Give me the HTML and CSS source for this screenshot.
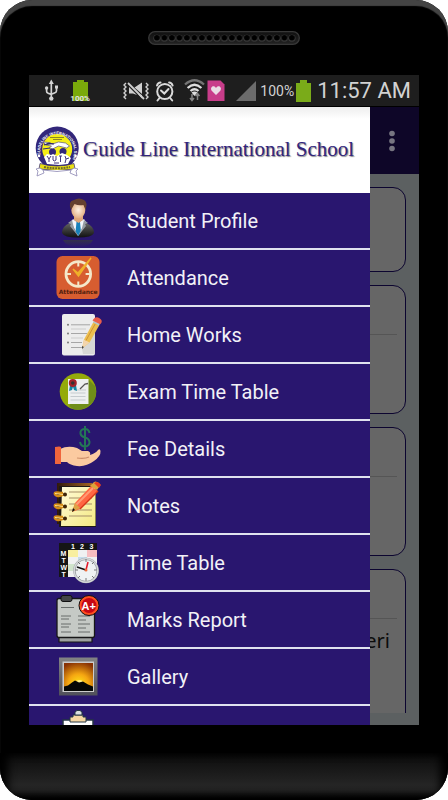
FILE: index.html
```html
<!DOCTYPE html>
<html lang="en">
<head>
<meta charset="utf-8">
<meta name="viewport" content="width=device-width, initial-scale=1">
<title>Guide Line International School</title>
<link rel="stylesheet" href="styles.css">
</head>
<body>
<div class="phone">
  <div class="phone-top">
    <svg class="speaker" width="152" height="14" viewBox="0 0 152 14" aria-hidden="true">
      <defs>
        <linearGradient id="spk" x1="0" y1="0" x2="0" y2="1"><stop offset="0" stop-color="#111"/><stop offset="1" stop-color="#222"/></linearGradient>
        <pattern id="holes" x="5.2" y="3" width="7.5" height="8" patternUnits="userSpaceOnUse">
          <circle cx="3.7" cy="4.2" r="3.4" fill="#404040"/><circle cx="3.7" cy="3.8" r="2.8" fill="#000"/>
        </pattern>
      </defs>
      <rect x=".7" y=".7" width="150.6" height="12.6" rx="6.3" fill="url(#spk)" stroke="#383838" stroke-width="1.3"/>
      <rect x="5.2" y="3" width="142.5" height="8" fill="url(#holes)"/>
    </svg>
  </div>

  <div class="screen">
    <header class="status">
      <svg class="status-icons" width="200" height="31" viewBox="0 0 200 31" aria-hidden="true">
        <g fill="none" stroke="#d4d4d4" stroke-width="1.7" stroke-linecap="round" stroke-linejoin="round">
          <path d="M22.3 8v15M17.6 13.500v2.700q0 1.500 1.500 2l3.200 1.200M27.500 12.800v3q0 1.600-1.500 2l-3.700 1.400"/>
        </g>
        <g fill="#d4d4d4"><path d="M22.300 4.500l2.500 4.500h-5z"/><circle cx="22.300" cy="23.600" r="2.200"/><circle cx="17.600" cy="13" r="1.700"/><path d="M26 10.500h3v3h-3z"/></g>
        <path d="M44 7h4V5h7v2h4v19H44z" fill="#7aaa0b"/>
        <text x="51.200" y="25.700" text-anchor="middle" class="tiny-percent">100%</text>
        <g stroke="#cfcfcf" fill="none" stroke-width="1.500">
          <path d="M97 8l-2 2 2 2-2 2 2 2-2 2 2 2-2 2 2 2M117 8l2 2-2 2 2 2-2 2 2 2-2 2 2 2-2 2" stroke-width="1.400"/>
          <path d="M99 8l16 16" stroke-width="1.800"/>
        </g>
        <path d="M100 12l8 8-4-1.500H100zM105.500 12.500L113 7.500v11.500zM109 19l4 4.500V20z" fill="#cfcfcf"/>
        <g stroke="#dadada" fill="none" stroke-width="2" stroke-linecap="round"><circle cx="135.800" cy="16.500" r="7.600"/><path d="M132 15.500l3.300 3 4.200-4.500M128 10.500q1-3 3.500-3M143.600 10.500q-1-3-3.500-3M130.500 23l-2 2.500M141.200 23l2 2.500"/></g>
        <g fill="none" stroke-width="2.300"><path d="M156 9.500Q165.500 1 175 9.500" stroke="#747474"/><path d="M158.600 13Q165.500 6.500 172.400 13M161.500 16Q165.500 12.500 169.500 16" stroke="#dedede"/></g>
        <path d="M162.500 17.500l3 3.500 3-3.500q-3-2-6 0z" fill="#dedede"/>
        <path d="M163 19v6M161 23l2 2.500 2-2.500M168.500 25v-6M166.500 21l2-2.500 2 2.500" fill="none" stroke="#858585" stroke-width="1.500"/>
        <path d="M178.500 5.500h13l4 4V26h-17z" fill="#c83d8a"/>
        <path d="M187 20l-4.500-4.500c-1.800-3.500 2.500-6 4.500-2.500 2-3.500 6.300-1 4.500 2.500z" fill="#eadde5"/>
      </svg>
      <svg class="signal" width="20" height="20" viewBox="0 0 20 20" aria-hidden="true"><path d="M0 20L20 0v20z" fill="#6c6c6c"/></svg>
      <span class="percent">100%</span>
      <svg class="battery" width="15" height="22" viewBox="0 0 15 22" aria-hidden="true"><path d="M0 3h4V0h7v3h4v19H0z" fill="#7aab19"/></svg>
      <span class="clock">11:57 AM</span>
    </header>

    <div class="app">
      <div class="toolbar">
        <button class="more" type="button" aria-label="More options">
          <svg width="6" height="22" viewBox="0 0 6 22"><g fill="#777581"><circle cx="3" cy="3.500" r="2.800"/><circle cx="3" cy="11" r="2.800"/><circle cx="3" cy="18.500" r="2.800"/></g></svg>
        </button>
      </div>
      <main class="cards">
        <section class="card card-short"></section>
        <section class="card"><hr></section>
        <section class="card"><hr></section>
        <section class="card card-last"><hr><p>eri</p></section>
      </main>

      <nav class="drawer" aria-label="Main menu">
        <div class="brand">
          <svg width="44" height="54" viewBox="0 0 44 54" aria-hidden="true">
            <defs><path id="ring" d="M7 34a17 17 0 1 1 30.400 0"/></defs>
            <circle cx="22.200" cy="23" r="21.500" fill="#32277a"/>
            <circle cx="22.200" cy="24" r="15" fill="#f4ee16"/>
            <text class="crest-text"><textPath href="#ring" startOffset="4">GUIDELINE INTERNATIONAL SCHOOL</textPath></text>
            <circle cx="4" cy="31" r="1.300" fill="#fff"/><circle cx="40.500" cy="31" r="1.300" fill="#fff"/>
            <path d="M15 12.500h14M18 14.500h9" stroke="#8d8824"/>
            <path d="M8.500 17l5 .5 4 1.500 6-2 7 1 4 3-3 2-8-2-6 3-3-1 2-2-6-1z" fill="#fff" stroke="#555381" stroke-width=".7"/>
            <path d="M9 20l5-2 5 1M8 24l7-1" stroke="#32277a" stroke-width="1.200"/>
            <circle cx="17.500" cy="27" r="3.500" fill="#32277a"/><circle cx="28" cy="26.500" r="3.500" fill="#32277a"/>
            <path d="M9 32l3-3 4 1 2-1 4 2 5-3 5 2 4 3-3 6-9 1-12-1z" fill="#fff"/>
            <path d="M12 31l2 3 2-3M14 34v3M18 31v4q1 2 3 0v-4M24 31h3M25.500 31v6M30 31l1 3 3-1M31 34l-1 4M19 38h5" fill="none" stroke="#45377f"/>
            <path d="M5 38.500q17 5 34 0l1 5.500q-18 3-36 0z" fill="#e9df14" stroke="#32277a" stroke-width=".7"/>
            <path d="M9 42q13 2.500 26 0" fill="none" stroke="#716b26" stroke-width="2" stroke-dasharray="2 .8"/>
            <path d="M5 43l-4 1 2 2-1 5 7-3-1-3zM39 43l4 1-2 2 1 5-7-3 1-3zM8 45q14 3 28 0" fill="#fff" stroke="#8c87b2" stroke-width=".8"/>
          </svg>
          <h1>Guide Line International School</h1>
        </div>
        <ul class="menu">
          <li><a href="#profile">
            <svg viewBox="0 0 54 54" aria-hidden="true">
              <defs><linearGradient id="suit" x1="0" y1="0" x2="0" y2="1"><stop offset="0" stop-color="#777"/><stop offset=".55" stop-color="#3c3c3c"/><stop offset="1" stop-color="#111"/></linearGradient><linearGradient id="refl" x1="0" y1="0" x2="0" y2="1"><stop offset="0" stop-color="#33314a"/><stop offset="1" stop-color="#29166f"/></linearGradient><radialGradient id="face"><stop offset="0" stop-color="#fff1e3"/><stop offset="1" stop-color="#e3ae83"/></radialGradient></defs>
              <path d="M12 46h30q-3 7-15 7t-15-7z" fill="url(#refl)"/>
              <path d="M11 39q0-7 8-10l5-3h7l4 3q8 3 8 10-2 4.500-16 4.500T11 39z" fill="url(#suit)"/>
              <path d="M22 25l5 4 6-4 2 3-8 14-7-14z" fill="#f3f6fa"/>
              <path d="M25.500 28h3.500l1 10-2.500 4-3-4z" fill="#1782bb"/>
              <path d="M21 26l-4 3 3 1-1 2 8 10-4-8zM33 26l4 3-3 1 1 2-8 10 4-8z" fill="#969da3"/>
              <path d="M23 20h9v6l-4.500 3-4.500-3z" fill="#dfa67b"/>
              <ellipse cx="27.300" cy="16" rx="7" ry="8.500" fill="url(#face)"/>
              <path d="M20 16Q16.500 7 23 6q5-3 10 0 4 2 1.500 10l-2-5q-5 1-9-1z" fill="#65402f"/>
            </svg>Student Profile</a></li>
          <li><a href="#attendance">
            <svg viewBox="0 0 54 54" aria-hidden="true">
              <rect x="5.500" y="5" width="43" height="43" rx="6" fill="#d75d30"/>
              <circle cx="27.300" cy="23" r="12.300" fill="none" stroke="#f4e8ca" stroke-width="2.800"/>
              <path d="M27.300 10.500v5M27.300 30.500v5M15 23h5M34.600 23h5" stroke="#f4e8ca" stroke-width="2"/>
              <path d="M22 18l5 4L40 7 27.500 25z" fill="#efb02a" stroke="#efb02a" stroke-width="1.400"/>
              <text x="27.200" y="43" text-anchor="middle" class="icon-label">Attendance</text>
            </svg>Attendance</a></li>
          <li><a href="#homework">
            <svg viewBox="0 0 54 54" aria-hidden="true">
              <rect x="11" y="6" width="33" height="41.500" rx="2" fill="#ececec"/><path d="M44 19v27H32l-1-5z" fill="#d7d7d5"/>
              <path d="M20 16.800h19M20 25.500h16M20 34.500h11M20 39.500h11" stroke="#a6a6a6"/>
              <path d="M20 21h15M20 30h12" stroke="#ccc"/>
              <g fill="#777"><circle cx="17" cy="16.800" r="1"/><circle cx="17" cy="25.500" r="1"/><circle cx="17" cy="34.500" r="1"/></g>
              <path d="M33 31.500L43 13l5.700 3.500-10.200 18L31 40.500z" fill="#edbe4e"/><path d="M33 31.500l5.500 3L31 40.500z" fill="#f3d5ac"/><path d="M31 38l2 1-2 2z" fill="#444"/>
              <path d="M35 32.500l10-18" stroke="#cf9434"/>
              <path d="M42 14.500l2-3.500q3-1 5.500 3l-1.500 3.500z" fill="#b6c5cd"/><path d="M43 12q2-3 5-1t1 4z" fill="#e95d4a" stroke="#e95d4a" stroke-width="2"/>
            </svg>Home Works</a></li>
          <li><a href="#exams">
            <svg viewBox="0 0 54 54" aria-hidden="true">
              <circle cx="27" cy="26.500" r="18.300" fill="#94aa0a"/><path d="M38 15l6 6q4 14-8 21-6 4-14 2l-4-3z" fill="#6f8e18"/>
              <rect x="17" y="14" width="20.500" height="25" fill="#edf0f0"/>
              <path d="M19.500 28h15M19.500 31.500h15M19.500 35h15M26 25h9" stroke="#c5cbce"/>
              <path d="M29 24l5-5 3-.5" fill="none" stroke="#555" stroke-width="1.300"/>
              <path d="M19 20l-1 6 3-1 1-3 1 3 3 1-1-6z" fill="#1686a3"/><circle cx="21.800" cy="18" r="4" fill="#a52329"/><circle cx="21.800" cy="18" r="1.800" fill="#333"/>
            </svg>Exam Time Table</a></li>
          <li><a href="#fees">
            <svg viewBox="0 0 54 54" aria-hidden="true">
              <path d="M38.500 11q-1-4.500-5-4-4.500.5-4 4.500.5 3 4.500 4t4.500 4.500q0 4-4.500 4.500-4 0-5-4.500M34 4v24" fill="none" stroke="#247656" stroke-width="2"/>
              <path d="M9 27q8-4 17-1l5 3h6q3 1 2 4 6-2 8-5 2-2 2.500 1 .5 5-6.500 10-8 6-17 5-7-1-10-4H9z" fill="#fbcaa0"/>
              <path d="M26 36q8 1 12-1" fill="none" stroke="#ce8f6a" stroke-width="1.200"/>
              <path d="M4 25q5-1 6 0v17H4z" fill="#f0653c"/>
            </svg>Fee Details</a></li>
          <li><a href="#notes">
            <svg viewBox="0 0 54 54" aria-hidden="true">
              <defs><linearGradient id="paper" x1="0" y1="0" x2="1" y2="1"><stop offset="0" stop-color="#fffbd8"/><stop offset="1" stop-color="#f5e982"/></linearGradient><linearGradient id="cover"><stop offset="0" stop-color="#30190c"/><stop offset="1" stop-color="#a26323"/></linearGradient></defs>
              <path d="M6 4h35v41H6z" fill="url(#cover)"/><path d="M8 7h37v41H8z" fill="#1e1816"/><path d="M11 8h33.500v39H10z" fill="url(#paper)"/>
              <path d="M18 13h23M18 19h23M18 25h23M18 31h23M18 37h23" stroke="#a78f68"/>
              <g fill="none" stroke="#d58c16" stroke-width="2.500"><path d="M14 15c-7 4-11 1-10-1 1-1 4 0 8 0M14 27c-7 4-11 1-10-1 1-1 4 0 8 0M14 39c-7 4-11 1-10-1 1-1 4 0 8 0"/></g>
              <g fill="#3f260a"><circle cx="14" cy="15.500" r="2"/><circle cx="14" cy="27.500" r="2"/><circle cx="14" cy="39.500" r="2"/></g><path d="M4 14.500l8 1M4 26.500l8 1M4 38.500l8 1" stroke="#ffe08a"/>
              <path d="M21 33l3-9L40 7l7 5-18 18z" fill="#ff6642"/><path d="M25 26L42 9" stroke="#ff9b75" stroke-width="2"/><path d="M29 30l18-18" stroke="#d73619" stroke-width="1.500"/>
              <path d="M21 33l3-9 5 5z" fill="#dca445"/><path d="M21 33l1-4 2 2z" fill="#111"/>
              <path d="M39 7l4-4q3-2 6.500 3l-3.500 5z" fill="#dba23b"/><path d="M43 4q4-3 7 2l-2 3z" fill="#e63920"/>
            </svg>Notes</a></li>
          <li><a href="#timetable">
            <svg viewBox="0 0 54 54" aria-hidden="true">
              <path d="M8 7h38v34H8z" fill="#151515"/><path d="M17 14h29v27H17z" fill="#f0f1f2"/>
              <path d="M17 14h10v7H17z" fill="#f8efa0"/><path d="M36 14h10v7H36z" fill="#f7bdc1"/><path d="M17 28h9v7h-9z" fill="#d0e4cc"/><path d="M27 21h9v7h-9z" fill="#c4dbeb"/>
              <text class="tiny-grid" x="20" y="12.500">1</text><text class="tiny-grid" x="29" y="12.500">2</text><text class="tiny-grid" x="38.500" y="12.500">3</text>
              <text class="tiny-grid" x="9.500" y="19.500">M</text><text class="tiny-grid" x="10.500" y="26.500">T</text><text class="tiny-grid" x="9.500" y="33.500">W</text><text class="tiny-grid" x="10.500" y="40.500">T</text>
              <circle cx="35" cy="34.500" r="12.800" fill="#999da0"/><circle cx="35" cy="34.500" r="10.500" fill="#eff2f3"/><circle cx="35" cy="34.500" r="11.800" fill="none" stroke="#d5d8da" stroke-width="1.500"/>
              <path d="M35 23v3M35 42v3M24 34h3M43 34h3M27 26l2 2M43 26l-2 2M27 42l2-2M43 42l-2-2" stroke="#777"/>
              <path d="M35 34l-9-3" stroke="#111" stroke-width="1.500"/><path d="M35 34l2-8" stroke="#e4192a" stroke-width="1.500"/><circle cx="35" cy="34" r="1.500" fill="#ef6b3a"/>
            </svg>Time Table</a></li>
          <li><a href="#marks">
            <svg viewBox="0 0 54 54" aria-hidden="true">
              <path d="M8 43h33v6H8z" fill="#9ea19f" stroke="#171717" stroke-width="1.200"/><rect x="6" y="5.500" width="37.500" height="39" rx="2" fill="#c5c9c5" stroke="#171717" stroke-width="1.300"/>
              <rect x="10" y="2.500" width="11" height="6" rx="2" fill="#444647" stroke="#111"/>
              <path d="M10 14.500h13M10 23h10M10 26h8M10 31h10M10 34h8M10 39h10M27 23h12M27 27h8M27 31h12M27 35h8M27 39h12" stroke="#686d6b"/>
              <circle cx="38" cy="12.500" r="10" fill="#ff4e20" stroke="#111"/><circle cx="38" cy="12.500" r="7.500" fill="#c60814"/>
              <text class="grade" x="37.700" y="16.500" text-anchor="middle">A+</text>
            </svg>Marks Report</a></li>
          <li><a href="#gallery">
            <svg viewBox="0 0 54 54" aria-hidden="true">
              <defs><radialGradient id="sun" cx=".5" cy=".75" r=".8"><stop offset="0" stop-color="#ffe51b"/><stop offset=".45" stop-color="#f5a611"/><stop offset="1" stop-color="#883205"/></radialGradient><linearGradient id="frame" x1="0" y1="0" x2="0" y2="1"><stop offset="0" stop-color="#838383"/><stop offset="1" stop-color="#50505a"/></linearGradient></defs>
              <path d="M8 7.500h38.500v38H8z" fill="url(#frame)"/><path d="M11.500 11.500h31.500v30.500H11.500z" fill="#ccc"/><path d="M13 13h29v28H13z" fill="url(#sun)"/>
              <ellipse cx="28.500" cy="31.500" rx="3" ry="1.500" fill="#fff18b"/><path d="M13 36.500l4-1 4-3 3-2 4 2 4-1 5 3 5 2V41H13z" fill="#050705"/>
            </svg>Gallery</a></li>
          <li><a href="#circulars">
            <svg viewBox="0 0 54 54" aria-hidden="true">
              <path d="M12 13h30v34H12z" fill="#fff" stroke="#243644" stroke-width="1.500"/><path d="M19 15v-5h3V8h10v2h3v5z" fill="#f5d6a4" stroke="#243644"/><path d="M24 8V5l2-1.500h3L31 5v3z" fill="#d9dedf" stroke="#243644"/>
            </svg>Circulars</a></li>
        </ul>
      </nav>
    </div>
  </div>
  <div class="phone-bottom"></div>
</div>
</body>
</html>
```
FILE: styles.css
```css
* { box-sizing: border-box; }

body {
  margin: 0;
  background: #fff;
  font-family: Roboto, "Noto Sans", sans-serif;
}

.phone {
  display: flex;
  flex-direction: column;
  height: 100vh;
  overflow: hidden;
  border-radius: 32px;
  background: #000;
  box-shadow: inset 0 6px 1px #444;
}

.phone-top {
  display: flex;
  flex: none;
  justify-content: center;
  height: 75px;
  padding-top: 31px;
}

.screen {
  display: flex;
  flex: 1;
  flex-direction: column;
  min-height: 0;
  margin: 0 29px;
  background: #000;
}

.phone-bottom {
  flex: none;
  height: 47px;
  margin-top: 28px;
  background: linear-gradient(#0b0b0b, #252525 68%, #202020 80%, #000);
  box-shadow: inset 8px 0 8px #000, inset -8px 0 8px #000;
}

.status {
  display: flex;
  flex: none;
  align-items: center;
  height: 31px;
  padding-right: 8px;
  background: #1e1e1e;
  color: #d2d2d2;
}

.status-icons { flex: none; margin-right: auto; }
.signal { flex: none; margin-right: 4px; }
.percent { font-size: 14px; line-height: 20px; }
.battery { flex: none; margin: 0 6px 0 2px; }
.clock { font-size: 22px; line-height: 28px; white-space: nowrap; }

.tiny-percent { font: bold 8px Roboto, sans-serif; fill: #e4e4e4; }

.app {
  position: relative;
  display: flex;
  flex: 1;
  flex-direction: column;
  min-height: 0;
  margin-top: 1px;
  overflow: hidden;
  background: #5c6061;
}

.toolbar {
  display: flex;
  flex: none;
  align-items: center;
  justify-content: flex-end;
  height: 67px;
  padding-right: 24px;
  background: #0e0628;
}

.more {
  display: flex;
  padding: 0;
  border: 0;
  background: none;
}

.cards {
  display: flex;
  flex: 1;
  flex-direction: column;
  gap: 13px;
  min-height: 0;
  margin: 13px 13px 12px;
  overflow: hidden;
}

.card {
  flex: none;
  height: 129px;
  padding: 48px 8px 0;
  border: 1px solid #0c0530;
  border-radius: 13px;
  background: #666;
}

.card-short { height: 85px; }
.card-last { height: 160px; }

.card hr {
  height: 1px;
  margin: 0;
  border: 0;
  background: #555;
}

.card p {
  margin: 8px 7px 0;
  color: #0c0c0c;
  font: 20px/28px "Noto Sans", sans-serif;
  text-align: right;
}

.drawer {
  position: absolute;
  top: 0;
  bottom: 0;
  left: 0;
  right: 49px;
  overflow: hidden;
  background: #29166f;
}

.brand {
  display: flex;
  align-items: center;
  gap: 4px;
  height: 86px;
  padding: 4px 6px 0;
  background: linear-gradient(#eee, #fff 12px);
}

.brand svg { flex: none; }

.brand h1 {
  margin: 0 0 6px;
  color: #32257d;
  font: 21px/24px "Liberation Serif", serif;
  text-shadow: 1px 1px 1px #8b8b8b;
  white-space: nowrap;
}

.menu {
  margin: 0;
  padding: 0;
  list-style: none;
}

.menu li {
  height: 57px;
  border-bottom: 2px solid #dfe2ef;
}

.menu a {
  display: flex;
  align-items: center;
  gap: 22px;
  height: 55px;
  padding-left: 22px;
  color: #f2f1f7;
  font-size: 20px;
  line-height: 24px;
  text-decoration: none;
}

.menu svg {
  flex: none;
  width: 54px;
  height: 54px;
}

.crest-text { font: bold 4px "Liberation Sans", sans-serif; fill: #fff; }
.icon-label { font: bold 6px "DejaVu Sans", sans-serif; fill: #51200e; }
.tiny-grid { font: bold 7px "Liberation Sans", sans-serif; fill: #fff; }
.grade { font: bold 11px "Liberation Sans", sans-serif; fill: #fff; }
```
